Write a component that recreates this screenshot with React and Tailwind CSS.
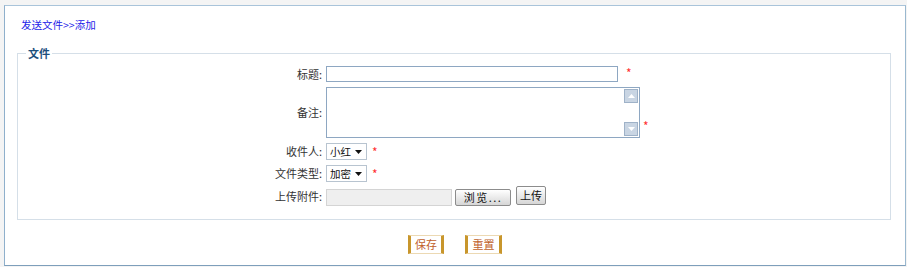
import React from 'react';

function Star({ className = '' }) {
  return <span className={`text-[#ff3030] text-[12px] leading-[12px] ${className}`}>*</span>;
}

function FakeSelect({ value }) {
  return (
    <div className="flex items-center justify-between w-[41px] h-[17px] border border-[#b8c4d0] bg-white pl-[3px] pr-[4px]">
      <span className="text-[10.5px] leading-[13px] text-[#111]">{value}</span>
      <svg width="7" height="4" viewBox="0 0 7 4"><path d="M0 0h7L3.5 4z" fill="#111" /></svg>
    </div>
  );
}

function Row({ label, children }) {
  return (
    <div className="flex items-center">
      <div className="w-[296px] mr-[4px] text-right text-[11px] leading-[13px] text-[#333]">{label}</div>
      {children}
    </div>
  );
}

export default function App() {
  return (
    <div className="h-[267px] bg-[#f4f4f4] pt-[5px] pl-[4px] pr-[1px] pb-[1px] font-['Noto_Sans_CJK_SC','Noto_Sans',sans-serif]">
      <div className="h-full bg-white border border-[#a9c4da] border-l-[#8fb0cc] border-b-[#7e9fbb] border-r-[#9ab8cf]">
        {/* breadcrumb */}
        <div className="pl-[16px] pt-[12px] text-[10.5px] leading-[14px] text-[#2424e8]">发送文件&gt;&gt;添加</div>

        <fieldset className="mt-[14px] ml-[12px] mr-[14px] border border-[#d5dfe8] px-[8px] pt-[6px] pb-[13px]">
          <legend className="px-[2px] text-[11px] leading-[14px] font-bold text-[#1c4f7c]">文件</legend>

          <div className="flex flex-col gap-[5px]">
            <Row label="标题:">
              <input className="w-[292px] h-[16px] border border-[#8ea7c2] outline-none" />
              <Star className="ml-[8px] -mt-[2px]" />
            </Row>

            <Row label="备注:">
              <div className="flex w-[314px] h-[51px] border border-[#8ea7c2] bg-white">
                <textarea className="flex-1 resize-none outline-none" />
                <div className="w-[15px] flex flex-col justify-between py-[1px] pr-[1px]">
                  <div className="h-[14px] bg-[#c9d5e3] border border-[#9fb2c8] flex items-center justify-center">
                    <svg width="7" height="4" viewBox="0 0 7 4"><path d="M0 4h7L3.5 0z" fill="#fff" /></svg>
                  </div>
                  <div className="h-[14px] bg-[#c9d5e3] border border-[#9fb2c8] flex items-center justify-center">
                    <svg width="7" height="4" viewBox="0 0 7 4"><path d="M0 0h7L3.5 4z" fill="#fff" /></svg>
                  </div>
                </div>
              </div>
              <Star className="ml-[3px] self-end mb-[6px]" />
            </Row>

            <Row label="收件人:">
              <FakeSelect value="小红" />
              <Star className="ml-[5px]" />
            </Row>

            <Row label="文件类型:">
              <FakeSelect value="加密" />
              <Star className="ml-[5px]" />
            </Row>

            <Row label="上传附件:">
              <div className="flex items-center mt-[2px]">
                <div className="w-[126px] h-[17px] bg-[#efefef] border border-[#d4d4d4]" />
                <button className="ml-[3px] w-[56px] h-[17px] rounded-[2px] border border-[#8c8c8c] bg-gradient-to-b from-[#ffffff] to-[#d6d6d6] text-[11px] leading-[13px] text-[#111] tracking-[1.5px]">
                  浏览...
                </button>
              </div>
              <button className="ml-[5px] w-[30px] h-[19px] -mt-[2px] rounded-[2px] border border-[#8c8c8c] bg-gradient-to-b from-[#ffffff] to-[#d6d6d6] text-[11px] leading-[13px] text-[#111]">
                上传
              </button>
            </Row>
          </div>
        </fieldset>

        <div className="mt-[15px] flex justify-center gap-[21px]">
          <button className="w-[36px] h-[19px] bg-white border-x-[3px] border-x-[#c8962c] border-y border-y-[#ecd9b3] text-[11px] leading-[13px] text-[#c0602a]">保存</button>
          <button className="w-[37px] h-[19px] bg-white border-x-[3px] border-x-[#c8962c] border-y border-y-[#ecd9b3] text-[11px] leading-[13px] text-[#c0602a]">重置</button>
        </div>
      </div>
    </div>
  );
}
